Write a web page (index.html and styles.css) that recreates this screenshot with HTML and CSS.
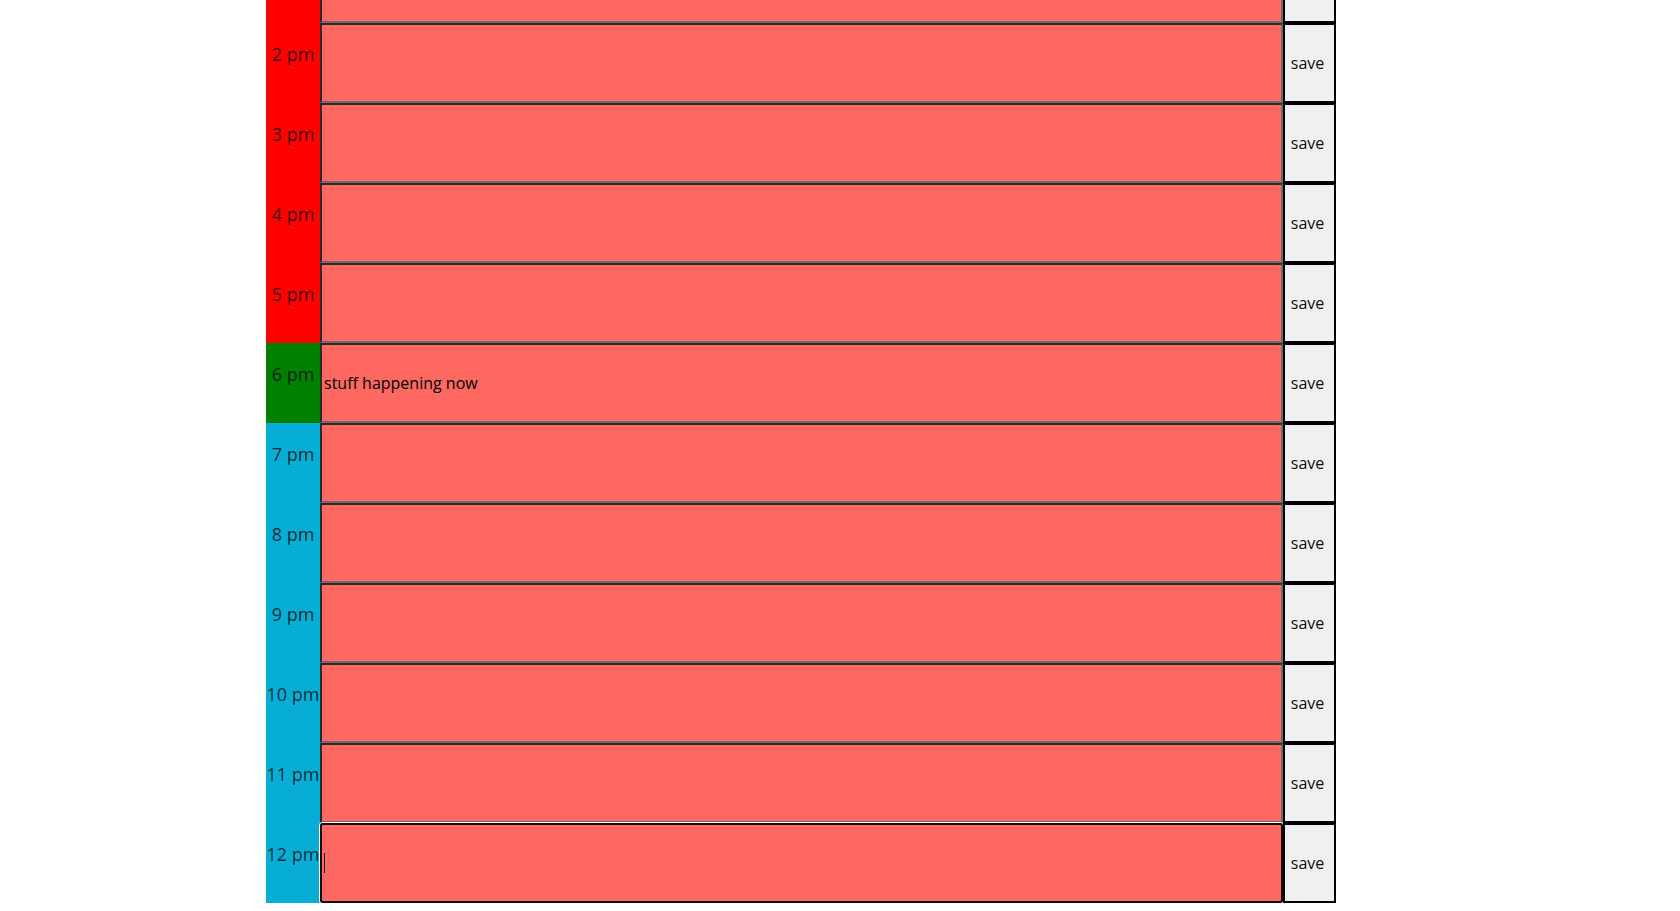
FILE: index.html
```html
<!DOCTYPE html>
<html lang="en">
<head>
<meta charset="utf-8">
<title>Work Day Scheduler</title>
<link rel="stylesheet" href="styles.css">
</head>
<body>
<main class="planner">
  <div class="time-block"><div class="hour past">1 pm</div><input class="description" type="text"><button class="save-btn">save</button></div>
  <div class="time-block"><div class="hour past">2 pm</div><input class="description" type="text"><button class="save-btn">save</button></div>
  <div class="time-block"><div class="hour past">3 pm</div><input class="description" type="text"><button class="save-btn">save</button></div>
  <div class="time-block"><div class="hour past">4 pm</div><input class="description" type="text"><button class="save-btn">save</button></div>
  <div class="time-block"><div class="hour past">5 pm</div><input class="description" type="text"><button class="save-btn">save</button></div>
  <div class="time-block"><div class="hour present">6 pm</div><input class="description" type="text" value="stuff happening now"><button class="save-btn">save</button></div>
  <div class="time-block"><div class="hour future">7 pm</div><input class="description" type="text"><button class="save-btn">save</button></div>
  <div class="time-block"><div class="hour future">8 pm</div><input class="description" type="text"><button class="save-btn">save</button></div>
  <div class="time-block"><div class="hour future">9 pm</div><input class="description" type="text"><button class="save-btn">save</button></div>
  <div class="time-block"><div class="hour future">10 pm</div><input class="description" type="text"><button class="save-btn">save</button></div>
  <div class="time-block"><div class="hour future">11 pm</div><input class="description" type="text"><button class="save-btn">save</button></div>
  <div class="time-block"><div class="hour future">12 pm</div><input class="description focused" type="text"><button class="save-btn">save</button></div>
</main>
</body>
</html>
```

FILE: styles.css
```css
html {
  overflow: hidden;
  background: #ffffff;
}

body {
  margin: 0;
  padding: 0 0 8px 266px;
  font-family: "Open Sans", "Liberation Sans", sans-serif;
}

.planner {
  margin-top: -57px;
  width: 1070px;
}

.time-block {
  display: flex;
  height: 80px;
}

.hour {
  box-sizing: border-box;
  width: 54px;
  flex: none;
  padding-top: 19px;
  font-size: 18px;
  line-height: 24px;
  text-align: center;
  white-space: nowrap;
  color: rgba(0, 0, 0, 0.75);
}

.past {
  background: #ff0000;
}

.present {
  background: #008000;
}

.future {
  background: #06aed5;
}

.description {
  box-sizing: border-box;
  width: 963px;
  height: 80px;
  flex: none;
  margin: 0;
  padding: 1px 2px;
  border-style: solid;
  border-width: 2px;
  border-color: #2a2a2a #6c6c6c #6c6c6c #2a2a2a;
  background-color: #ff6961;
  font-family: "Open Sans", "Liberation Sans", sans-serif;
  font-size: 16px;
  color: #000000;
  outline: none;
}

.description.focused,
.description.focused:focus {
  outline: 2px solid #101010;
  outline-offset: -2px;
  border-radius: 3px;
  box-shadow: 0 0 0 1px #ffffff;
  background-image: linear-gradient(#000000, #000000);
  background-repeat: no-repeat;
  background-size: 1px 20px;
  background-position: 2px center;
}

.save-btn {
  box-sizing: border-box;
  width: 53px;
  height: 80px;
  flex: none;
  margin: 0;
  padding: 0 6px 1px 2px;
  border: 2px solid #000000;
  background: #f0f0f0;
  font-family: "Open Sans", "Liberation Sans", sans-serif;
  font-size: 16px;
  color: #111111;
}
```
